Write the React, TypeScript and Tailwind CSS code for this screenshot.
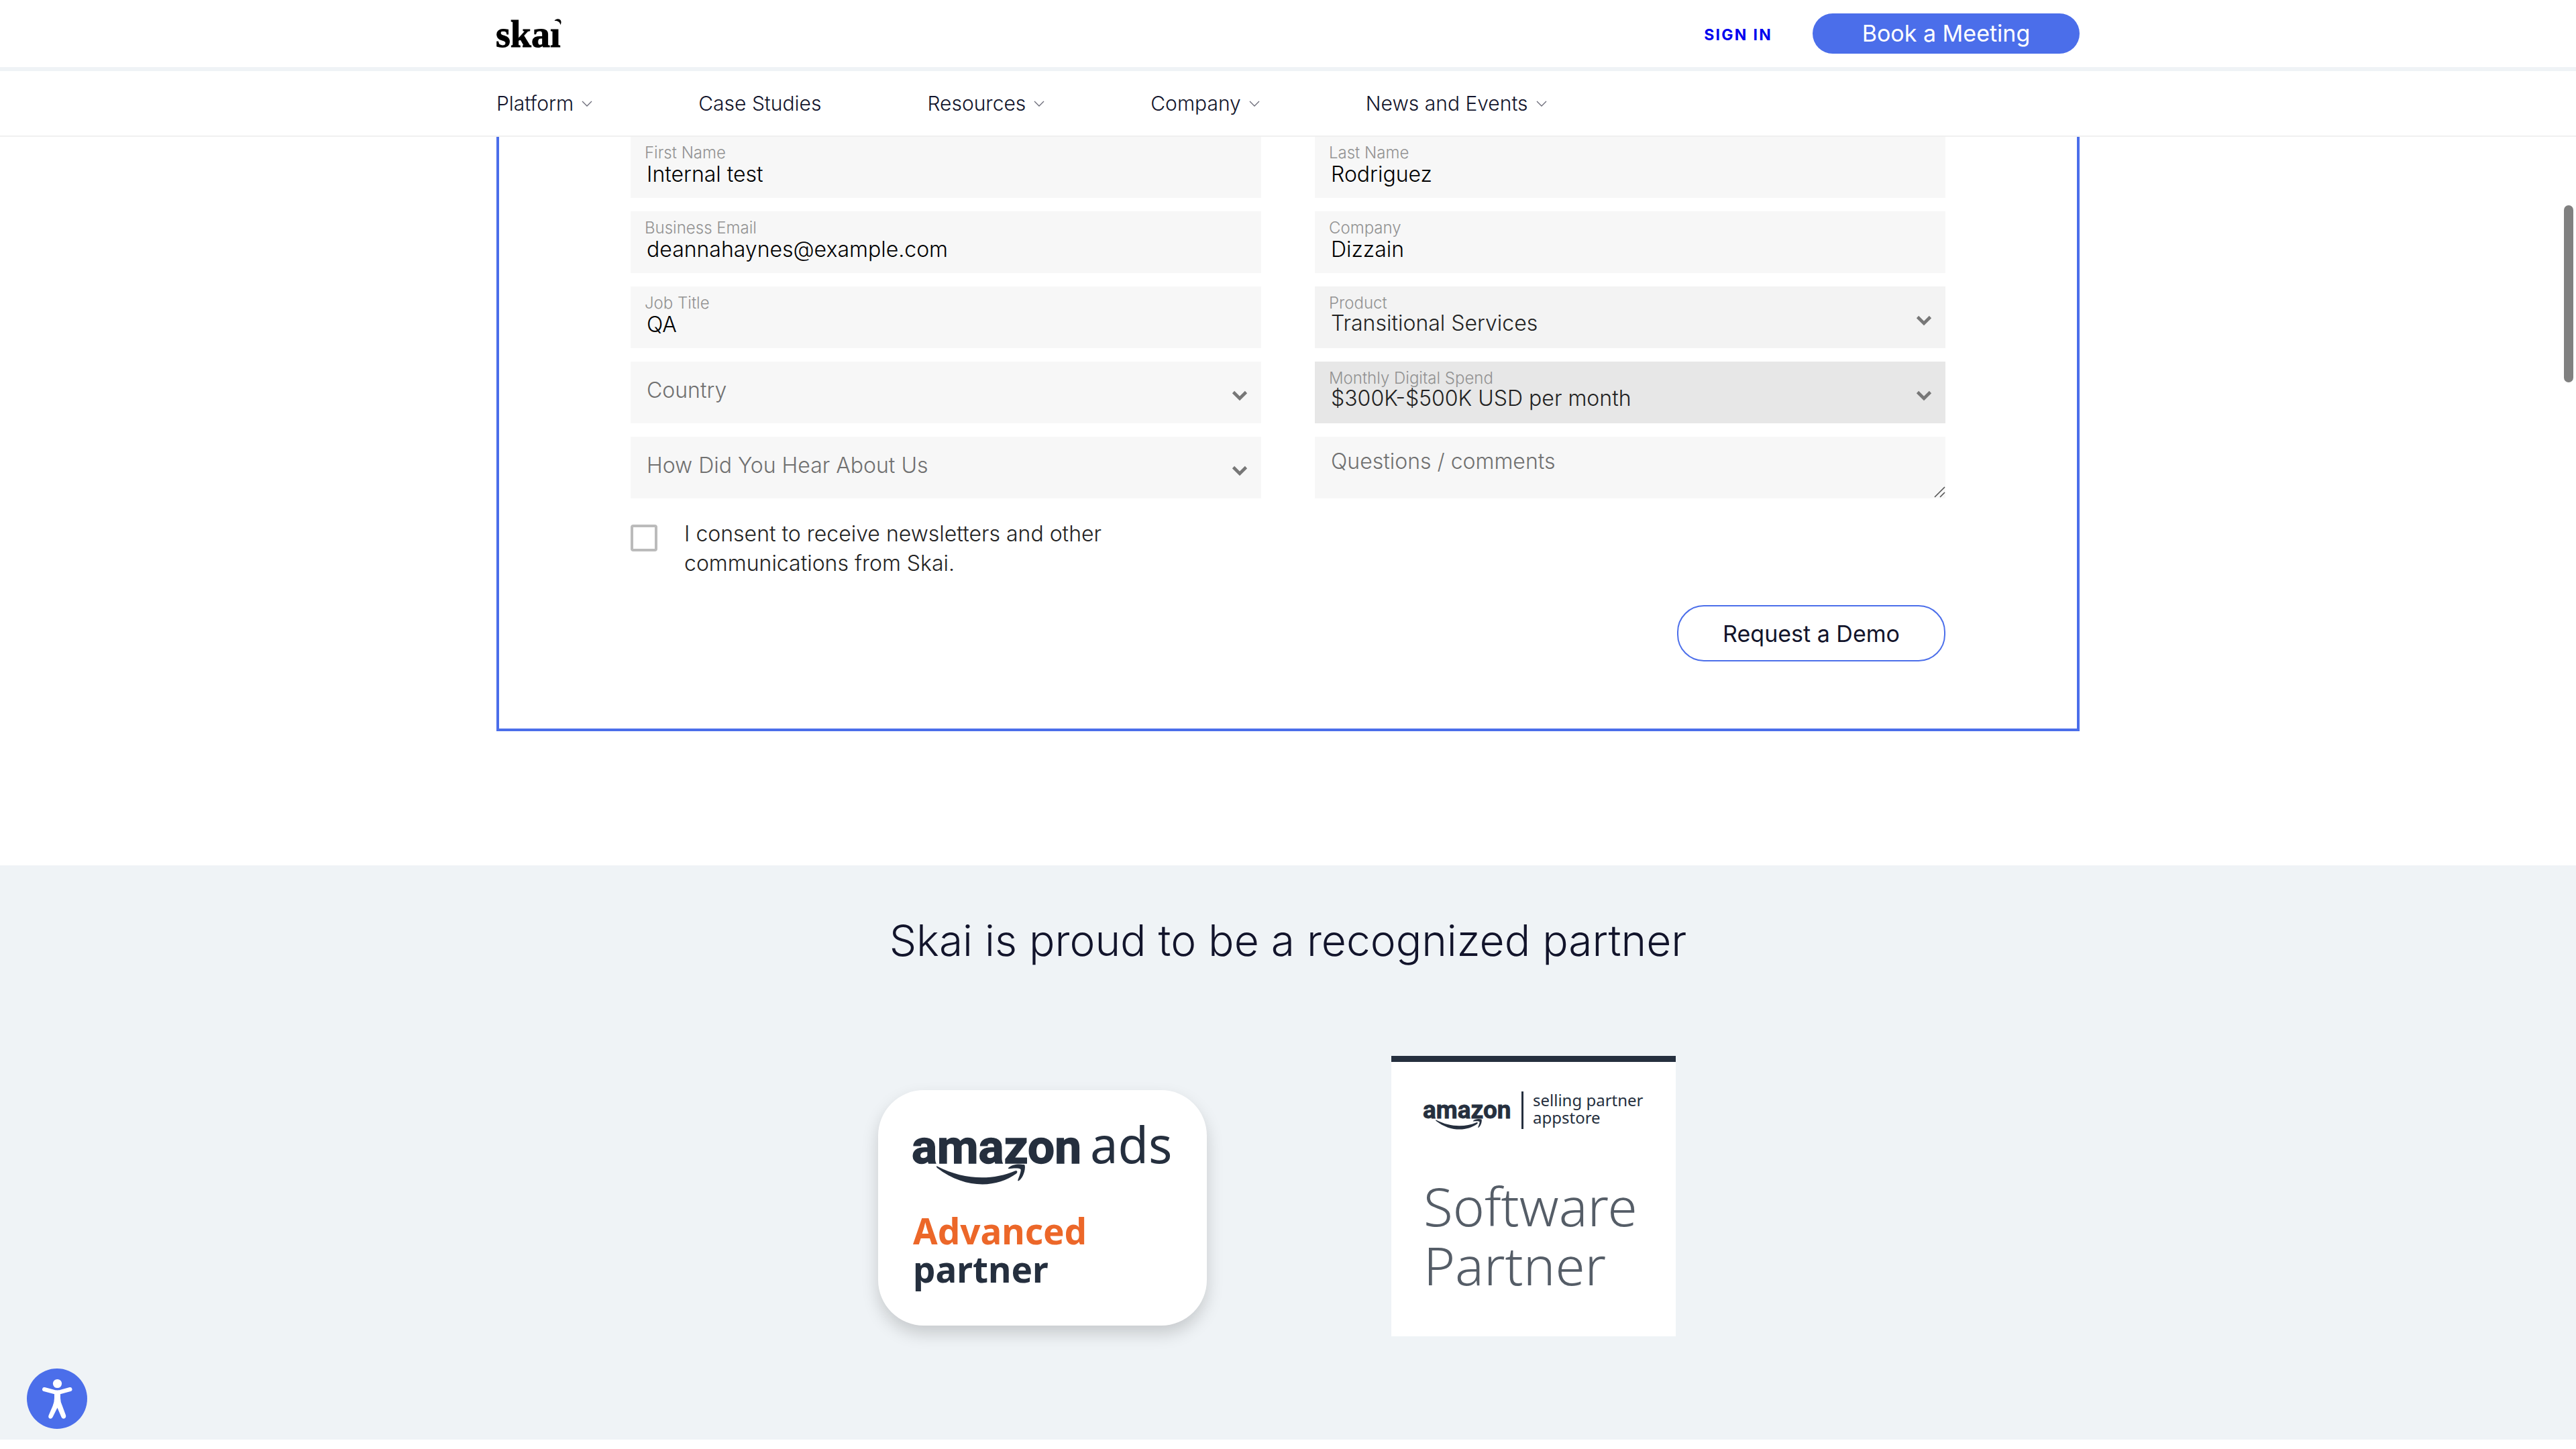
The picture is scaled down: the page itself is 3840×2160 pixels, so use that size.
import type { ReactNode } from "react";

const navItems = [
  { label: "Platform", menu: true },
  { label: "Case Studies", menu: false },
  { label: "Resources", menu: true },
  { label: "Company", menu: true },
  { label: "News and Events", menu: true },
];

function SkaiLogo() {
  return (
    <svg width="100" height="52" viewBox="0 0 100 52" className="overflow-visible" aria-label="Skai" role="img">
      <text
        x="-1"
        y="46"
        className="fill-black stroke-black font-['Liberation_Serif',serif] text-[56px] font-bold"
        strokeWidth="1"
      >
        skaı
      </text>
      <path d="M86.5 7 C89 3 96 3.500 96.500 8.500 C96.600 10.500 96 12 95.200 13 C95 9 91.500 6.500 86.500 7 Z" fill="black" />
    </svg>
  );
}

function NavChevron() {
  return (
    <svg width="16" height="9" viewBox="0 0 16 9" fill="none" aria-hidden="true">
      <path d="M1 1 L8 8 L15 1" stroke="#6b6b78" strokeWidth="1.3" />
    </svg>
  );
}

function Field({ label, shade = "bg-[#f7f7f7]", children }: { label?: string; shade?: string; children: ReactNode }) {
  return (
    <label className={`relative flex h-[92px] flex-col ${shade}`}>
      {label && <span className="mt-[13px] pl-[21px] text-[24px] leading-[24px] text-[#929292]">{label}</span>}
      {children}
    </label>
  );
}

function TextField({ label, value, type = "text" }: { label: string; value: string; type?: string }) {
  return (
    <Field label={label}>
      <input
        type={type}
        defaultValue={value}
        className="h-10 w-full bg-transparent pl-6 text-[32px] leading-[40px] text-black outline-none"
      />
    </Field>
  );
}

function SelectField({ label, value, shade }: { label?: string; value: string; shade?: string }) {
  return (
    <Field label={label} shade={shade}>
      <select
        aria-label={label ?? value}
        className={`w-full appearance-none bg-transparent pl-6 text-[32px] leading-[36px] outline-none ${
          label ? "h-9 text-[#222222]" : "h-[86px] text-[#707070]"
        }`}
      >
        <option>{value}</option>
      </select>
      <svg
        className="pointer-events-none absolute right-5 top-[43px]"
        width="24"
        height="16"
        viewBox="0 0 24 16"
        fill="none"
        aria-hidden="true"
      >
        <path d="M2.500 2.500 L12 12 L21.500 2.500" stroke="#777777" strokeWidth="4.600" />
      </svg>
    </Field>
  );
}

function AmazonMark({ width, height, withAds = false }: { width: number; height: number; withAds?: boolean }) {
  return (
    <svg width={width} height={height} viewBox="0 0 250 94" className="overflow-visible" fill="#252f3e">
      <text
        x="-2"
        y="60"
        className="font-['Roboto',sans-serif] text-[71px] font-bold"
        stroke="#252f3e"
        strokeWidth="1.5"
      >
        amazon
      </text>
      {withAds && (
        <text x="264" y="60" className="font-['Noto_Sans',sans-serif] text-[74px] font-normal">
          ads
        </text>
      )}
      <path d="M36 64.500 C75 85 118 86 152 71.500 C155.500 70.500 156.500 73 154 75.500 C124 97.500 77 98.500 36 67 C34.500 65.500 34.800 63.800 36 64.500 Z" />
      <path d="M142 67 C148 61.500 158 60.500 166.500 62.500 C168 68 165.500 80 158 86 C156.500 87 155.800 86 156.500 84.500 C158.500 79.500 161.500 71.500 160.500 69 C158.500 67 149 67.500 143.500 68.300 C142 68.500 141.500 67.800 142 67 Z" />
    </svg>
  );
}

export default function App() {
  return (
    <div className="relative min-h-screen bg-white font-['Inter',sans-serif] font-light text-[#12142b]">
      <header className="relative z-10 bg-white">
        <div className="border-b-[6px] border-[#eff3f6]">
          <div className="mx-auto flex h-[100px] w-full max-w-[2360px] items-center justify-between">
            <a href="#home">
              <SkaiLogo />
            </a>
            <div className="flex items-center gap-15">
              <a href="#signin" className="pt-1 text-[23px] font-bold tracking-widest text-[#0000ee]">
                SIGN IN
              </a>
              <button
                type="button"
                className="h-[60px] w-[398px] rounded-full bg-[#4b6eea] text-[34px] font-normal leading-[60px] text-white"
              >
                Book a Meeting
              </button>
            </div>
          </div>
        </div>
        <nav className="border-b-2 border-[#f0f0f0]">
          <ul className="mx-auto flex h-24 w-full max-w-[2360px] items-center gap-[158px]">
            {navItems.map((item) => (
              <li key={item.label}>
                <a href="#nav" className="flex items-center gap-3 text-[30px] leading-[40px]">
                  {item.label}
                  {item.menu && <NavChevron />}
                </a>
              </li>
            ))}
          </ul>
        </nav>
      </header>

      <main>
        <form className="mx-auto -mt-px mb-[200px] w-full max-w-[2360px] border-x-4 border-b-4 border-[#4b6eea] px-[196px] pb-[100px]">
          <div className="grid grid-cols-2 gap-x-20 gap-y-5">
            <TextField label="First Name" value="Internal test" />
            <TextField label="Last Name" value="Rodriguez" />
            <TextField label="Business Email" value="deannahaynes@example.com" type="email" />
            <TextField label="Company" value="Dizzain" />
            <TextField label="Job Title" value="QA" />
            <SelectField label="Product" value="Transitional Services" shade="bg-[#f3f3f3]" />
            <SelectField value="Country" />
            <SelectField label="Monthly Digital Spend" value="$300K-$500K USD per month" shade="bg-[#e7e7e7]" />
            <SelectField value="How Did You Hear About Us" />
            <Field>
              <textarea
                aria-label="Questions / comments"
                placeholder="Questions / comments"
                className="h-[92px] w-full resize-none overflow-hidden bg-transparent pl-6 pt-[17px] text-[32px] leading-[40px] outline-none placeholder:text-[#707070]"
              />
              <svg
                className="pointer-events-none absolute bottom-0 right-0"
                width="18"
                height="18"
                viewBox="0 0 18 18"
                fill="none"
                aria-hidden="true"
              >
                <path d="M2 16 L17 1 M10 16 L17 9" stroke="#555555" strokeWidth="1.600" />
              </svg>
            </Field>
          </div>
          <label className="mt-[31px] flex max-w-[780px] items-start gap-10">
            <input
              type="checkbox"
              className="mt-2 size-10 shrink-0 appearance-none rounded-[4px] border-4 border-[#bbbbbb] bg-white"
            />
            <span className="text-[32px] leading-[44px] text-[#222222]">
              I consent to receive newsletters and other communications from Skai.
            </span>
          </label>
          <div className="mt-10 flex justify-end">
            <button
              type="button"
              className="h-[84px] w-[400px] rounded-[40px] border-2 border-[#4b6eea] text-[34px] font-normal"
            >
              Request a Demo
            </button>
          </div>
        </form>

        <section className="bg-[#eff3f6] pb-[154px] pt-[74px]">
          <h2 className="text-center text-[64px] font-light leading-[76px]">Skai is proud to be a recognized partner</h2>
          <div className="mt-[134px] flex items-start justify-center gap-[275px] pr-[33px]">
            <div className="mt-[51px] h-[351px] w-[490px] rounded-[68px] bg-white pl-[52px] pt-[49px] font-['Noto_Sans',sans-serif] text-[53px] font-bold leading-[57px] shadow-[0_12px_24px_rgba(0,0,0,0.17)]">
              <AmazonMark width={250} height={94} withAds />
              <p className="mt-[38px] text-[#ec6729]">Advanced</p>
              <p className="text-[#252f3e]">partner</p>
            </div>
            <div className="h-[418px] w-[424px] border-t-[9px] border-[#252f3e] bg-white pl-12 pt-11 font-['Noto_Sans',sans-serif]">
              <div className="flex h-14 items-start text-[24px] font-normal leading-[26px] text-[#252f3e]">
                <div className="mt-[9px]">
                  <AmazonMark width={130} height={49} />
                </div>
                <div className="ml-4 h-14 w-[3px] bg-[#252f3e]" />
                <p className="ml-[14px]">
                  selling partner
                  <br />
                  appstore
                </p>
              </div>
              <p className="mt-[70px] text-[80px] font-light leading-[88px] text-[#555d67]">
                Software
                <br />
                Partner
              </p>
            </div>
          </div>
        </section>
      </main>

      <button
        type="button"
        aria-label="Accessibility options"
        className="fixed bottom-[30px] left-10 size-[90px] rounded-full bg-[#4b6eea]"
      >
        <svg width="90" height="90" viewBox="0 0 90 90" fill="none" aria-hidden="true">
          <circle cx="45.500" cy="22.500" r="6.600" fill="white" />
          <path d="M26 31 L41 35 Q45.500 36 50 35 L64.500 31" stroke="white" strokeWidth="6" strokeLinecap="round" />
          <path
            d="M41 33 H50 V44 Q50 50 53 56 L58 69.500 Q59 73 56 74.500 Q53 75.500 51.500 72.500 L45.500 58.500 L38.500 72.500 Q37 75.500 34 74.500 Q31.500 73 32.500 70 L38.500 56 Q41 50 41 44 Z"
            fill="white"
          />
        </svg>
      </button>
      <div className="fixed right-1 top-[306px] h-[264px] w-[14px] rounded-full bg-[#808080]" />
    </div>
  );
}
